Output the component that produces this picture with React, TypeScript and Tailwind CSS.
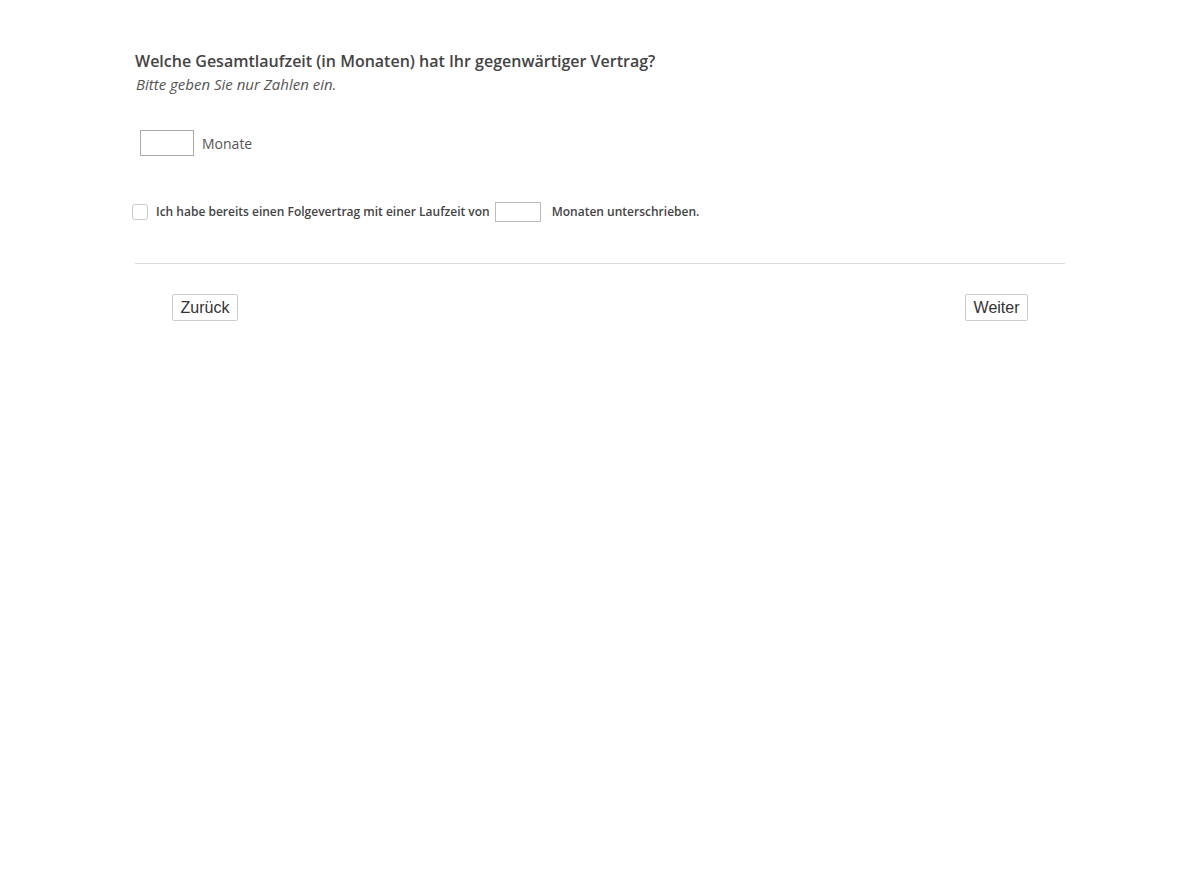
const App = () => {
  return (
    <div className="min-h-screen bg-white text-[#444] font-['Open_Sans',sans-serif]">
      <div className="mx-auto w-[930px] pt-[50px]">
        <h1 className="text-[16px] leading-[22px] font-semibold text-[#444]">
          Welche Gesamtlaufzeit (in Monaten) hat Ihr gegenwärtiger Vertrag?
        </h1>
        <p className="mt-[1px] text-[15px] leading-[22px] italic text-[#555] pl-px">
          Bitte geben Sie nur Zahlen ein.
        </p>

        <div className="flex items-center gap-[8px] mt-[35px] ml-[5px]">
          <input
            type="text"
            className="w-[54px] h-[26px] border border-[#aaa] bg-white outline-none"
          />
          <span className="text-[14px] text-[#555]">Monate</span>
        </div>

        <div className="flex items-center mt-[46px] -ml-[3px] text-[12px] font-semibold text-[#444]">
          <span className="w-[16px] h-[16px] rounded-[3px] border border-[#ccc] bg-white" />
          <span className="ml-[8px]">Ich habe bereits einen Folgevertrag mit einer Laufzeit von</span>
          <input
            type="text"
            className="ml-[5px] w-[46px] h-[20px] border border-[#bbb] bg-white outline-none"
          />
          <span className="ml-[11px]">Monaten unterschrieben.</span>
        </div>

        <div className="mt-[41px] border-t border-[#ddd]" />

        <div className="flex justify-between pl-[37px] pr-[37px] mt-[30px] font-['Liberation_Sans',Arial,sans-serif]">
          <button className="h-[27px] px-[7.5px] border border-[#ccc] rounded-[2px] bg-white text-[16px] text-[#333]">
            Zurück
          </button>
          <button className="h-[27px] px-[7.5px] border border-[#ccc] rounded-[2px] bg-white text-[16px] text-[#333]">
            Weiter
          </button>
        </div>
      </div>
    </div>
  );
};

export default App;
